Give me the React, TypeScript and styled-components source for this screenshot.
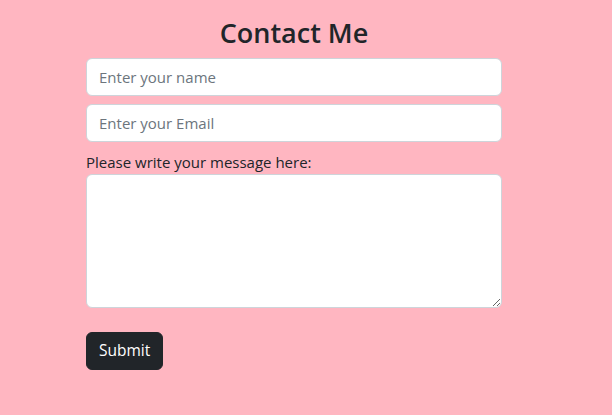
import React from "react";
import styled, { createGlobalStyle } from "styled-components";

const Global = createGlobalStyle`
  html, body { margin: 0; padding: 0; background: #ffb6c1; }
  body {
    font-family: "Open Sans", "Noto Sans", sans-serif;
    color: #212529;
    font-size: 16px;
    line-height: 1.5;
  }
  * { box-sizing: border-box; }
`;

const Page = styled.main`
  min-height: 415px;
  background: #ffb6c1;
  padding: 16px 0 0 86px;
`;

const Form = styled.form`
  width: 416px;
  display: flex;
  flex-direction: column;
`;

const Title = styled.h2`
  margin: 0 0 8px;
  font-size: 27px;
  font-weight: 600;
  line-height: 34px;
  text-align: center;
  color: #212529;
`;

const Input = styled.input`
  display: block;
  width: 100%;
  height: 38px;
  padding: 6px 12px;
  font: inherit;
  font-size: 15px;
  color: #212529;
  background: #fff;
  border: 1px solid #ced4da;
  border-radius: 6px;
  margin-bottom: 8px;
  outline: none;
  &::placeholder { color: #6c757d; opacity: 1; }
`;

const Label = styled.label`
  display: block;
  font-size: 15px;
  line-height: 24px;
`;

const TextArea = styled.textarea`
  display: block;
  width: 100%;
  height: 134px;
  padding: 6px 12px;
  font: inherit;
  background: #fff;
  border: 1px solid #ced4da;
  border-radius: 6px;
  resize: vertical;
  outline: none;
`;

const Button = styled.button`
  align-self: flex-start;
  margin-top: 24px;
  height: 38px;
  padding: 6px 12px;
  font: inherit;
  font-size: 15.5px;
  color: #fff;
  background: #212529;
  border: 1px solid #212529;
  border-radius: 6px;
  cursor: pointer;
`;

export default function App() {
  return (
    <>
      <Global />
      <Page>
        <Form onSubmit={(e) => e.preventDefault()}>
          <Title>Contact Me</Title>
          <Input type="text" placeholder="Enter your name" />
          <Input type="email" placeholder="Enter your Email" />
          <Label htmlFor="msg">Please write your message here:</Label>
          <TextArea id="msg" rows={5} />
          <Button type="submit">Submit</Button>
        </Form>
      </Page>
    </>
  );
}
